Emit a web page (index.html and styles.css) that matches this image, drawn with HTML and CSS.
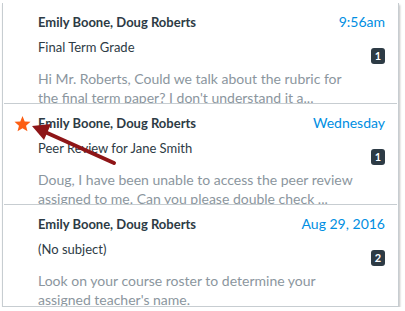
FILE: index.html
```html
<!DOCTYPE html>
<html>
<head>
<link rel="stylesheet" href="styles.css">
</head>
<body>
<div class='inbox'>
  <div class='message'>
    <div class='msg-gutter'></div>
    <div class='msg-body'>
      <div class='msg-top'>
        <span class='msg-from'>Emily Boone, Doug Roberts</span>
        <span class='msg-date'>9:56am</span>
      </div>
      <div class='msg-mid'>
        <span class='msg-subject'>Final Term Grade</span>
        <span class='msg-count'>1</span>
      </div>
      <div class='msg-preview'>Hi Mr. Roberts, Could we talk about the rubric for the final term paper? I don't understand it a...</div>
    </div>
  </div>
  <div class='message'>
    <div class='msg-gutter'>
      <svg class='star' viewBox='0 0 24 24'>
        <path d='M12 1.5l3.1 7.6 8.2.6-6.3 5.3 2 8-7-4.4-7 4.4 2-8L.7 9.7l8.2-.6z' fill='#fc5e13'/>
      </svg>
    </div>
    <div class='msg-body'>
      <div class='msg-top'>
        <span class='msg-from'>Emily Boone, Doug Roberts</span>
        <span class='msg-date'>Wednesday</span>
      </div>
      <div class='msg-mid'>
        <span class='msg-subject'>Peer Review for Jane Smith</span>
        <span class='msg-count'>1</span>
      </div>
      <div class='msg-preview'>Doug, I have been unable to access the peer review assigned to me. Can you please double check ...</div>
    </div>
  </div>
  <div class='message'>
    <div class='msg-gutter'></div>
    <div class='msg-body'>
      <div class='msg-top'>
        <span class='msg-from'>Emily Boone, Doug Roberts</span>
        <span class='msg-date'>Aug 29, 2016</span>
      </div>
      <div class='msg-mid'>
        <span class='msg-subject'>(No subject)</span>
        <span class='msg-count'>2</span>
      </div>
      <div class='msg-preview'>Look on your course roster to determine your assigned teacher's name.</div>
    </div>
  </div>
</div>
<svg class='callout' viewBox='0 0 405 311'>
  <line x1='114' y1='163' x2='45' y2='132' stroke='#8e1517' stroke-width='4' stroke-linecap='round'/>
  <path d='M32 126L51 124 44 140Z' fill='#8e1517'/>
</svg>
</body>
</html>
```

FILE: styles.css
```css
body { margin: 0; background: #fff; font-family: Lato, "Open Sans", sans-serif; position: relative; }
.inbox { margin: 3px 6px 0 2px; border: 1px solid #c7cdd1; border-top: none; background: #fff; box-shadow: 1px 2px 2px rgba(0,0,0,0.25); height: 304px; box-sizing: border-box; overflow: hidden; }
.message { display: flex; height: 101px; box-sizing: border-box; border-bottom: 1px solid #c7cdd1; margin: 0 1px; overflow: hidden; }
.message:last-child { border-bottom: none; }
.msg-gutter { width: 34px; flex: none; display: flex; justify-content: center; padding-top: 11px; padding-left: 2px; box-sizing: border-box; }
.star { width: 17px; height: 17px; }
.msg-body { flex: 1; padding: 9px 12px 0 0; min-width: 0; }
.msg-top { display: flex; justify-content: space-between; align-items: baseline; height: 20px; line-height: 20px; }
.msg-from { font-weight: 700; font-size: 13px; color: #2d3b45; }
.msg-date { font-size: 14px; color: #008ee2; }
.msg-mid { display: flex; justify-content: space-between; align-items: flex-start; margin-top: 5px; height: 26px; }
.msg-subject { font-size: 13px; line-height: 20px; color: #2d3b45; }
.msg-count { margin-top: 11px; min-width: 14px; height: 16px; line-height: 16px; border-radius: 3px; background: #2d3b45; color: #fff; font-size: 11px; font-weight: 700; text-align: center; }
.msg-preview { margin-top: 6px; font-size: 14px; line-height: 19px; color: #8b969e; padding-right: 28px; }
.callout { position: absolute; left: 0; top: 0; width: 405px; height: 311px; pointer-events: none; }
```
